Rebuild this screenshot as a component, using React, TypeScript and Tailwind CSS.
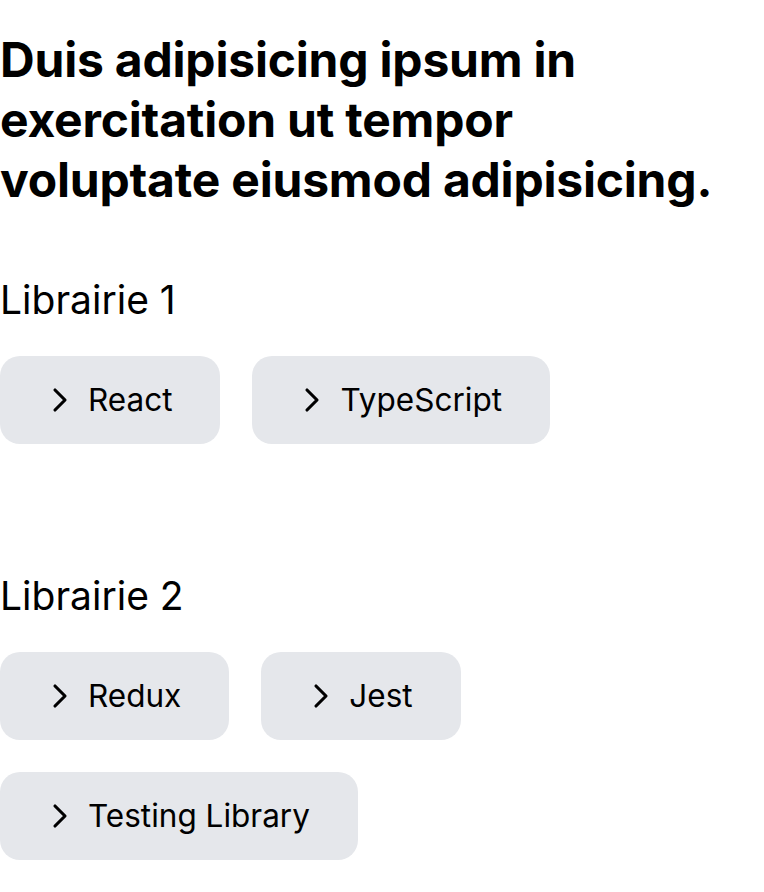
import { ChevronRight } from "lucide-react";

const sections = [
    { title: "Librairie 1", items: ["React", "TypeScript"] },
    { title: "Librairie 2", items: ["Redux", "Jest", "Testing Library"] },
];

const LibButton = ({ label }: { label: string }) => (
    <button className="inline-flex items-center gap-2 h-[88px] pl-10 pr-12 bg-gray-200 rounded-[20px] text-[31.5px] text-black">
        <ChevronRight size={40} strokeWidth={1.9} />
        <span>{label}</span>
    </button>
);

export default function App() {
    return (
        <div className="min-h-screen bg-white text-black [font-family:Inter,'Noto_Sans',sans-serif]">
            <h1 className="pt-[30px] text-5xl leading-[60px] font-bold tracking-[-0.2px] pr-10">
                Duis adipisicing ipsum in exercitation ut tempor voluptate eiusmod adipisicing.
            </h1>

            {sections.map((section, i) => (
                <section key={section.title} className={i === 0 ? "mt-[66px]" : "mt-[128px]"}>
                    <h2 className="text-[39px] leading-[48px] font-normal">{section.title}</h2>
                    <div className="mt-8 flex flex-wrap gap-8">
                        {section.items.map((item) => (
                            <LibButton key={item} label={item} />
                        ))}
                    </div>
                </section>
            ))}
        </div>
    );
}
